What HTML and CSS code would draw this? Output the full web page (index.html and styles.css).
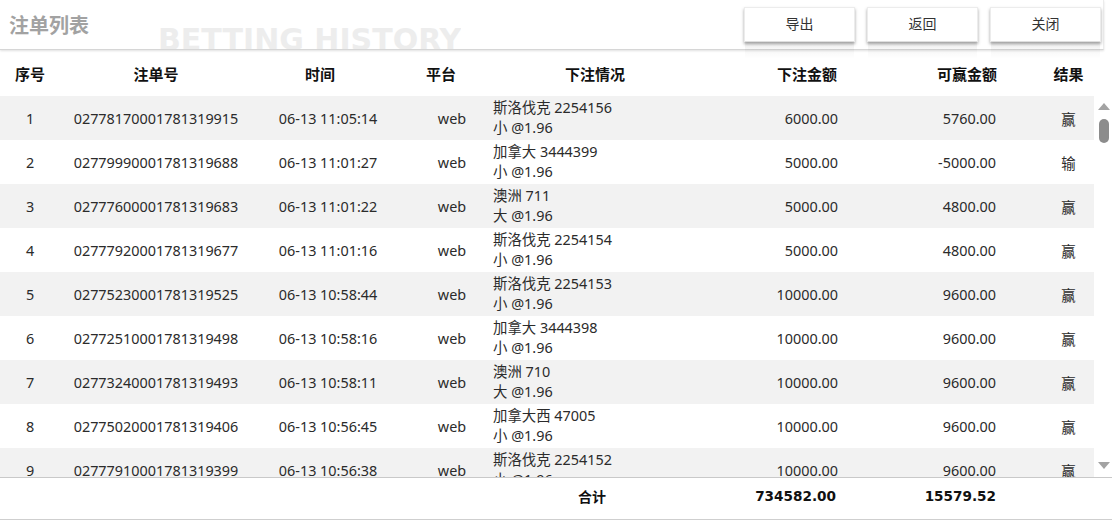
FILE: index.html
```html
<!DOCTYPE html>
<html lang="zh">
<head>
<meta charset="utf-8">
<title>注单列表</title>
<link rel="stylesheet" href="styles.css">
</head>
<body>
<div class="page">
  <header class="topbar">
    <h1 class="title">注单列表</h1>
    <div class="wm"><span>BETTING HISTORY</span></div>
    <div class="actions">
      <button class="btn">导出</button>
      <button class="btn">返回</button>
      <button class="btn">关闭</button>
    </div>
  </header>

  <div class="grid head">
    <div class="c c1">序号</div>
    <div class="c c2">注单号</div>
    <div class="c c3 h3">时间</div>
    <div class="c c4 h4">平台</div>
    <div class="c c5 h5">下注情况</div>
    <div class="c c6">下注金额</div>
    <div class="c c7">可赢金额</div>
    <div class="c c8">结果</div>
  </div>

  <div class="body">
    <div class="rows">
      <div class="grid row">
        <div class="c c1">1</div><div class="c c2">02778170001781319915</div><div class="c c3">06-13 11:05:14</div><div class="c c4 d4">web</div>
        <div class="c c5 d5">斯洛伐克 2254156<br>小 @1.96</div><div class="c c6">6000.00</div><div class="c c7">5760.00</div><div class="c c8">赢</div>
      </div>
      <div class="grid row">
        <div class="c c1">2</div><div class="c c2">02779990001781319688</div><div class="c c3">06-13 11:01:27</div><div class="c c4 d4">web</div>
        <div class="c c5 d5">加拿大 3444399<br>小 @1.96</div><div class="c c6">5000.00</div><div class="c c7">-5000.00</div><div class="c c8">输</div>
      </div>
      <div class="grid row">
        <div class="c c1">3</div><div class="c c2">02777600001781319683</div><div class="c c3">06-13 11:01:22</div><div class="c c4 d4">web</div>
        <div class="c c5 d5">澳洲 711<br>大 @1.96</div><div class="c c6">5000.00</div><div class="c c7">4800.00</div><div class="c c8">赢</div>
      </div>
      <div class="grid row">
        <div class="c c1">4</div><div class="c c2">02777920001781319677</div><div class="c c3">06-13 11:01:16</div><div class="c c4 d4">web</div>
        <div class="c c5 d5">斯洛伐克 2254154<br>小 @1.96</div><div class="c c6">5000.00</div><div class="c c7">4800.00</div><div class="c c8">赢</div>
      </div>
      <div class="grid row">
        <div class="c c1">5</div><div class="c c2">02775230001781319525</div><div class="c c3">06-13 10:58:44</div><div class="c c4 d4">web</div>
        <div class="c c5 d5">斯洛伐克 2254153<br>小 @1.96</div><div class="c c6">10000.00</div><div class="c c7">9600.00</div><div class="c c8">赢</div>
      </div>
      <div class="grid row">
        <div class="c c1">6</div><div class="c c2">02772510001781319498</div><div class="c c3">06-13 10:58:16</div><div class="c c4 d4">web</div>
        <div class="c c5 d5">加拿大 3444398<br>小 @1.96</div><div class="c c6">10000.00</div><div class="c c7">9600.00</div><div class="c c8">赢</div>
      </div>
      <div class="grid row">
        <div class="c c1">7</div><div class="c c2">02773240001781319493</div><div class="c c3">06-13 10:58:11</div><div class="c c4 d4">web</div>
        <div class="c c5 d5">澳洲 710<br>大 @1.96</div><div class="c c6">10000.00</div><div class="c c7">9600.00</div><div class="c c8">赢</div>
      </div>
      <div class="grid row">
        <div class="c c1">8</div><div class="c c2">02775020001781319406</div><div class="c c3">06-13 10:56:45</div><div class="c c4 d4">web</div>
        <div class="c c5 d5">加拿大西 47005<br>小 @1.96</div><div class="c c6">10000.00</div><div class="c c7">9600.00</div><div class="c c8">赢</div>
      </div>
      <div class="grid row">
        <div class="c c1">9</div><div class="c c2">02777910001781319399</div><div class="c c3">06-13 10:56:38</div><div class="c c4 d4">web</div>
        <div class="c c5 d5">斯洛伐克 2254152<br>小 @1.96</div><div class="c c6">10000.00</div><div class="c c7">9600.00</div><div class="c c8">赢</div>
      </div>
    </div>
    <div class="scrollbar">
      <svg class="arrow" width="12" height="8" viewBox="0 0 12 8"><polygon points="0,8 12,8 6,1" fill="#a3a3a3"/></svg>
      <div class="thumb"></div>
      <div class="spacer"></div>
      <svg class="arrow" width="12" height="8" viewBox="0 0 12 8"><polygon points="0,0 12,0 6,7" fill="#a3a3a3"/></svg>
    </div>
  </div>

  <div class="grid foot">
    <div class="c c1"></div><div class="c c2"></div><div class="c c3"></div><div class="c c4"></div>
    <div class="c c5 f5">合计</div>
    <div class="c c6 num">734582.00</div>
    <div class="c c7 num">15579.52</div>
    <div class="c c8"></div>
  </div>
</div>
</body>
</html>
```

FILE: styles.css
```css
* { box-sizing: border-box; }

body {
  margin: 0;
  background: #fff;
  font-family: "Noto Sans", "Noto Sans CJK SC", sans-serif;
  font-size: 14px;
  color: #333;
}

.page {
  width: 1115px;
  height: 526px;
  overflow: hidden;
}

.topbar {
  position: relative;
  z-index: 2;
  width: 1104px;
  height: 50px;
  display: flex;
  justify-content: space-between;
  align-items: flex-start;
  padding: 7px 2px 0 9px;
  border-bottom: 1px solid #d6d6d6;
  border-right: 1px solid #ececec;
  box-shadow: 0 1px 2px rgba(0, 0, 0, 0.12);
  background: #fff;
}

.title {
  margin: 0;
  padding-top: 6px;
  font-size: 20px;
  line-height: 24px;
  font-weight: bold;
  color: #a2a2a2;
  font-family: "Noto Sans CJK SC", sans-serif;
}

.wm {
  position: absolute;
  left: 158px;
  top: 25px;
  height: 24px;
  overflow: hidden;
  font-family: "DejaVu Sans", sans-serif;
  font-weight: bold;
  font-size: 30px;
  line-height: 30px;
  color: #ededed;
  white-space: nowrap;
}

.actions {
  display: flex;
  gap: 12px;
}

.btn {
  position: relative;
  width: 111px;
  height: 35px;
  border: 1px solid #ececec;
  background: #fff;
  font-family: "Noto Sans CJK SC", sans-serif;
  font-size: 14px;
  color: #333;
  padding: 0 0 3px 0;
  box-shadow: 0 2px 3px rgba(0, 0, 0, 0.35);
}

.btn::after {
  content: "";
  position: absolute;
  left: 0;
  right: 0;
  top: 100%;
  height: 18px;
  background: linear-gradient(rgba(0, 0, 0, 0.06), rgba(0, 0, 0, 0));
}

.grid {
  display: grid;
  grid-template-columns: 60px 192px 152px 86px 210px 140px 196px 58px;
  width: 1094px;
}

.c {
  display: flex;
  align-items: center;
  justify-content: center;
  white-space: nowrap;
}

.c6 { justify-content: flex-end; padding-right: 2px; }
.c7 { justify-content: flex-end; padding-right: 40px; }
.c8 { padding-left: 7px; }

.head {
  height: 46px;
  font-family: "Noto Sans CJK SC", sans-serif;
  font-weight: bold;
  font-size: 15px;
  color: #111;
}
.head .c6 { padding-right: 3px; }
.head .c7 { padding-right: 39px; }
.h3 { padding-right: 16px; }
.h4 { padding-right: 12px; }
.h5 { padding-right: 0; }

.body {
  display: flex;
  width: 1112px;
  height: 381px;
}

.rows {
  width: 1094px;
  height: 381px;
  overflow: hidden;
}

.row {
  height: 44px;
  color: #2b2b2b;
  font-size: 14.4px;
}
.row:nth-child(odd) { background: #f2f2f2; }

.d4 { padding-left: 10px; }
.d5 {
  justify-content: flex-start;
  text-align: left;
  padding-left: 3px;
  line-height: 20px;
}

.scrollbar {
  width: 18px;
  display: flex;
  flex-direction: column;
  align-items: center;
  padding: 6px 0 7px 1px;
}
.arrow { display: block; flex: none; }
.thumb {
  margin-top: 9px;
  width: 10px;
  height: 24px;
  border-radius: 5px;
  background: #8c8c8c;
}
.spacer { flex: 1; }

.foot {
  width: 1112px;
  grid-template-columns: 60px 192px 152px 86px 210px 140px 196px 76px;
  height: 43px;
  padding-bottom: 5px;
  border-top: 1px solid #c9c9c9;
  border-bottom: 1px solid #cfcfcf;
  font-weight: bold;
  color: #111;
}
.f5 {
  font-family: "Noto Sans CJK SC", sans-serif;
  font-size: 14px;
  padding-right: 6px;
}
.num {
  font-family: "DejaVu Sans", sans-serif;
  font-size: 13.6px;
}
.foot .c6 { padding-right: 4px; }
```
